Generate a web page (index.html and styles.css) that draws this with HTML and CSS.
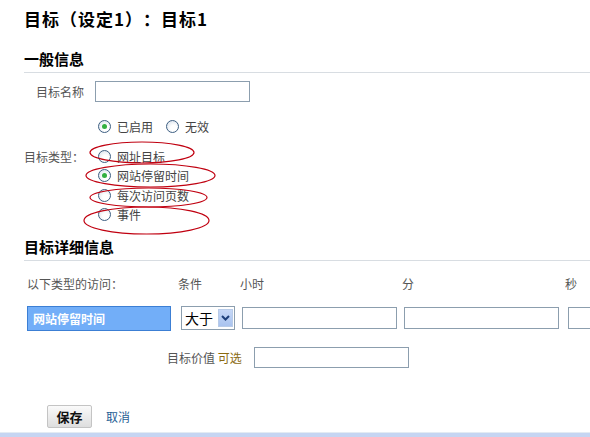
FILE: index.html
```html
<!DOCTYPE html>
<html lang="zh-CN">
<head>
  <meta charset="UTF-8" />
  <title>目标（设定1）：目标1</title>
  <link rel="stylesheet" href="styles.css">
</head>
<body>

  <h1 class="title">目标（设定1）：目标1</h1>

  <h2 class="section">一般信息</h2>

  <div class="form-row name-row">
    <label class="label">目标名称</label>
    <input class="text-input" type="text">
  </div>

  <div class="form-row status-row">
    <span class="label"></span>
    <div class="choices inline">
      <span class="choice"><i class="radio checked"></i>已启用</span>
      <span class="choice"><i class="radio"></i>无效</span>
    </div>
  </div>

  <div class="form-row type-row">
    <span class="label">目标类型：</span>
    <div class="choices">
      <span class="choice"><i class="radio"></i>网址目标</span>
      <span class="choice"><i class="radio checked"></i>网站停留时间</span>
      <span class="choice"><i class="radio"></i>每次访问页数</span>
      <span class="choice"><i class="radio"></i>事件</span>
    </div>
  </div>

  <h2 class="section detail">目标详细信息</h2>

  <div class="detail-grid">
    <span class="head">以下类型的访问：</span>
    <span class="head">条件</span>
    <span class="head">小时</span>
    <span class="head">分</span>
    <span class="head">秒</span>

    <div class="type-box">网站停留时间</div>
    <div class="select">
      <span>大于</span>
      <span class="select-btn">
        <svg width="9" height="6" viewBox="0 0 9 6"><path d="M1 1 L4.5 4.5 L8 1" fill="none" stroke="#1d3f7a" stroke-width="2"/></svg>
      </span>
    </div>
    <input class="text-input" type="text">
    <input class="text-input" type="text">
    <input class="text-input" type="text">
  </div>

  <div class="value-row">
    <span class="value-label">目标价值 <span class="optional">可选</span></span>
    <input class="text-input" type="text">
  </div>

  <div class="actions">
    <button class="save">保存</button>
    <a class="cancel" href="#">取消</a>
  </div>

  <div class="bottom-bar"></div>

  <!-- red marks drawn over the goal type options -->
  <svg class="marks" width="590" height="437">
    <ellipse cx="142" cy="152.5" rx="52" ry="10.5" />
    <ellipse cx="150.5" cy="175.5" rx="64.5" ry="11.5" />
    <ellipse cx="148.5" cy="197.5" rx="58.5" ry="9.5" />
    <ellipse cx="146.5" cy="220.5" rx="62.5" ry="13.5" />
  </svg>

</body>
</html>
```

FILE: styles.css
```css
html {
  overflow: hidden;
}
body {
  margin: 0;
  padding: 0;
  width: 590px;
  height: 437px;
  position: relative;
  overflow: hidden;
  background: white;
  font-family: "Noto Sans CJK SC", "Liberation Sans", sans-serif;
  font-size: 12px;
  color: #555;
  text-spacing-trim: space-all;
}
.title {
  margin: 0;
  padding: 9px 0 0 24px;
  font-size: 17px;
  line-height: 20px;
  letter-spacing: 1px;
  color: #000;
  font-weight: bold;
}
.section {
  margin: 20px 0 0 24px;
  padding: 0 0 3px;
  font-size: 15px;
  line-height: 20px;
  color: #000;
  font-weight: bold;
  border-bottom: 1px solid #d8dde2;
}
.section.detail {
  margin-top: 12px;
}
.form-row {
  display: flex;
  align-items: flex-start;
}
.label {
  width: 60px;
  margin-left: 24px;
  margin-right: 11px;
  text-align: right;
  line-height: 20px;
  flex-shrink: 0;
}
.text-input {
  width: 155px;
  height: 21px;
  box-sizing: border-box;
  border: 1px solid #8c9eae;
  margin: 0;
  padding: 0 3px;
  background: white;
}
.name-row {
  margin-top: 8px;
}
.name-row .label {
  margin-top: 1px;
}
.status-row {
  margin-top: 15px;
}
.type-row {
  margin-top: 10px;
}
.choices {
  display: flex;
  flex-direction: column;
}
.choices.inline {
  flex-direction: row;
  gap: 10px;
}
.choice {
  display: flex;
  align-items: center;
  height: 19.5px;
  line-height: 19.5px;
  color: #444;
}
.radio {
  width: 11px;
  height: 11px;
  margin: 0 6px 0 3px;
  border: 1px solid #3e5f82;
  border-radius: 50%;
  background: radial-gradient(circle at 60% 65%, #ffffff 30%, #dfe6ee 80%);
  display: inline-flex;
  align-items: center;
  justify-content: center;
}
.radio.checked::after {
  content: "";
  width: 5px;
  height: 5px;
  border-radius: 50%;
  background: #33b040;
}
.detail-grid {
  display: grid;
  grid-template-columns: 151px 62px 162px 163px 163px;
  grid-template-rows: 20px 25px;
  row-gap: 12px;
  margin: 13px 0 0 27px;
  align-items: center;
}
.head {
  color: #555;
  line-height: 20px;
}
.type-box {
  width: 144px;
  height: 25px;
  box-sizing: border-box;
  background: #72aef8;
  border: 1px solid #3c7fd4;
  color: white;
  font-weight: bold;
  line-height: 23px;
  padding-left: 5px;
}
.select {
  width: 54px;
  height: 24px;
  margin-left: 3px;
  box-sizing: border-box;
  border: 1px solid #8c9eae;
  display: flex;
  align-items: center;
  justify-content: space-between;
  padding: 0 1px 0 3px;
  font-size: 14px;
  color: #000;
}
.select-btn {
  width: 15px;
  height: 18px;
  background: linear-gradient(#c5d7f7, #a9c3ef);
  border: 1px solid #b8cbe8;
  box-sizing: border-box;
  display: flex;
  align-items: center;
  justify-content: center;
}
.detail-grid .text-input {
  margin-left: 2px;
  height: 22px;
}
.detail-grid .text-input:last-child {
  margin-left: 3px;
}
.value-row {
  display: flex;
  align-items: center;
  margin: 16px 0 0 167px;
}
.value-label {
  color: #555;
  margin-right: 12px;
  font-size: 12px;
}
.optional {
  color: #8a6a10;
}
.actions {
  display: flex;
  align-items: center;
  margin: 37px 0 0 47px;
}
.save {
  width: 45px;
  height: 23px;
  border: 1px solid #c4c4c4;
  border-radius: 2px;
  background: linear-gradient(#fafafa, #dedede);
  font-family: "Noto Sans CJK SC", sans-serif;
  font-size: 13px;
  font-weight: bold;
  color: #111;
  padding: 0;
}
.cancel {
  margin-left: 14px;
  color: #1f5e95;
  text-decoration: none;
}
.bottom-bar {
  position: absolute;
  left: 0;
  right: 0;
  bottom: 0;
  height: 4px;
  border-top: 1px solid #e3ebf3;
  background: #c6d5f2;
}
.marks {
  position: absolute;
  left: 0;
  top: 0;
  pointer-events: none;
}
.marks ellipse {
  fill: none;
  stroke: #c00010;
  stroke-width: 1.2;
}
```
